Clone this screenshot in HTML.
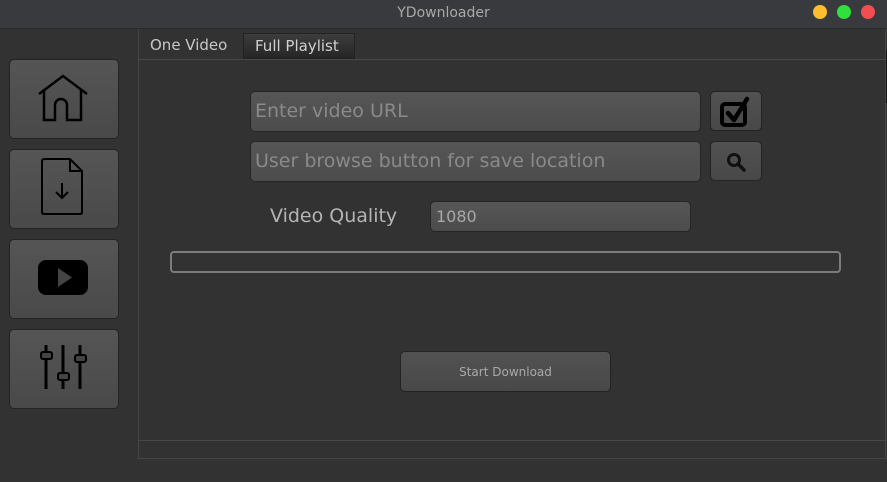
<!DOCTYPE html><html><head><style>
body{margin:0;width:887px;height:482px;background:#323232;font-family:"Liberation Sans","DejaVu Sans",sans-serif;position:relative;overflow:hidden}
.a{position:absolute;box-sizing:border-box}
.title{left:0;top:0;width:887px;height:29px;background:#393a3e;border-bottom:1px solid #2a2a2a;color:#a9a9a9;font-family:"DejaVu Sans",sans-serif;font-size:14px;text-align:center;line-height:26px}
.dot{width:14px;height:14px;border-radius:50%;top:5px}
.sb{left:9px;width:110px;height:80px;border:1px solid #232323;border-radius:5px;background:linear-gradient(#555,#494949)}
.in{border:1px solid #252525;border-radius:5px;background:linear-gradient(#565656,#4c4c4c);color:#8a8a8a;font-family:"DejaVu Sans",sans-serif;font-size:19px;padding-left:4px;line-height:39px}
.btn{border:1px solid #232323;border-radius:5px;background:linear-gradient(#525252,#484848)}
</style></head><body>
<div class="a title">YDownloader</div>
<div class="a dot" style="left:813px;background:#fcbd2e"></div>
<div class="a dot" style="left:837px;background:#30e03d"></div>
<div class="a dot" style="left:861px;background:#f14e50"></div>
<div class="a" style="left:885px;top:50px;width:2px;height:53px;background:#111"></div>
<div class="a" style="left:138px;top:29px;width:748px;height:430px;border:1px solid #454545;border-top:none"></div>
<div class="a" style="left:139px;top:59px;width:746px;height:1px;background:#484848"></div>
<div class="a" style="left:139px;top:440px;width:746px;height:1px;background:#484848"></div>
<div class="a" style="left:150px;top:36px;color:#c8c8c8;font-family:'DejaVu Sans',sans-serif;font-size:15px">One Video</div>
<div class="a" style="left:243px;top:33px;width:112px;height:26px;border:1px solid #222;background:linear-gradient(#3c3c3c,#262626);color:#d0d0d0;font-family:'DejaVu Sans',sans-serif;font-size:15px;padding-left:11px;line-height:24px">Full Playlist</div>
<div class="a sb" style="top:59px"><svg width="110" height="80" style="position:absolute;left:-1px;top:-1px"><path d="M30 35 L54 17 L78 35 M35 30 V61 H46 V46 A6 6 0 0 1 58 46 V61 H72 V30" fill="none" stroke="#000" stroke-width="2.5"/></svg></div>
<div class="a sb" style="top:149px"><svg width="110" height="80" style="position:absolute;left:-1px;top:-1px"><path d="M36 10 H61 L73 22 V63 Q73 65 71 65 H35 Q33 65 33 63 V12 Q33 10 36 10 Z M61 10 V22 H73 M53 34 V48 M47 43 L53 49 L59 43" fill="none" stroke="#000" stroke-width="2"/></svg></div>
<div class="a sb" style="top:239px"><svg width="110" height="80" style="position:absolute;left:-1px;top:-1px"><rect x="29" y="21" width="50" height="35" rx="8" fill="#000"/><path d="M49 29 L63 38.5 L49 48Z" fill="#444"/></svg></div>
<div class="a sb" style="top:329px"><svg width="110" height="80" style="position:absolute;left:-1px;top:-1px"><path d="M37 16 V60 M54 16 V60 M71 16 V60" stroke="#000" stroke-width="3"/><rect x="32" y="23" width="11" height="7" rx="2" fill="#444" stroke="#000" stroke-width="2"/><rect x="49" y="44" width="11" height="7" rx="2" fill="#444" stroke="#000" stroke-width="2"/><rect x="66" y="26" width="11" height="7" rx="2" fill="#444" stroke="#000" stroke-width="2"/></svg></div>
<div class="a in" style="left:250px;top:91px;width:451px;height:41px">Enter video URL</div>
<div class="a in" style="left:250px;top:141px;width:451px;height:41px">User browse button for save location</div>
<div class="a btn" style="left:710px;top:91px;width:52px;height:40px"><svg width="52" height="40" style="position:absolute;left:-1px;top:-1px"><rect x="12" y="13" width="23" height="21" rx="3" fill="none" stroke="#000" stroke-width="4"/><path d="M18 22 L24 29 L37 8" fill="none" stroke="#000" stroke-width="4.5" stroke-linecap="round" stroke-linejoin="round"/></svg></div>
<div class="a btn" style="left:710px;top:141px;width:52px;height:40px"><svg width="52" height="40" style="position:absolute;left:-1px;top:-1px"><circle cx="24" cy="19" r="5.5" fill="none" stroke="#111" stroke-width="3"/><path d="M28 23 L34 29" stroke="#111" stroke-width="3.5" stroke-linecap="round"/></svg></div>
<div class="a" style="left:270px;top:205px;color:#b4b4b4;font-family:'DejaVu Sans',sans-serif;font-size:19px">Video Quality</div>
<div class="a in" style="left:430px;top:201px;width:261px;height:31px;font-size:16px;line-height:29px;color:#a8a8a8;padding-left:5px">1080</div>
<div class="a" style="left:170px;top:251px;width:671px;height:22px;border:2px solid #7c7c7c;border-radius:4px"></div>
<div class="a btn" style="left:400px;top:351px;width:211px;height:41px;color:#a9a9a9;font-family:'DejaVu Sans',sans-serif;font-size:12px;text-align:center;line-height:40px">Start Download</div>
</body></html>
